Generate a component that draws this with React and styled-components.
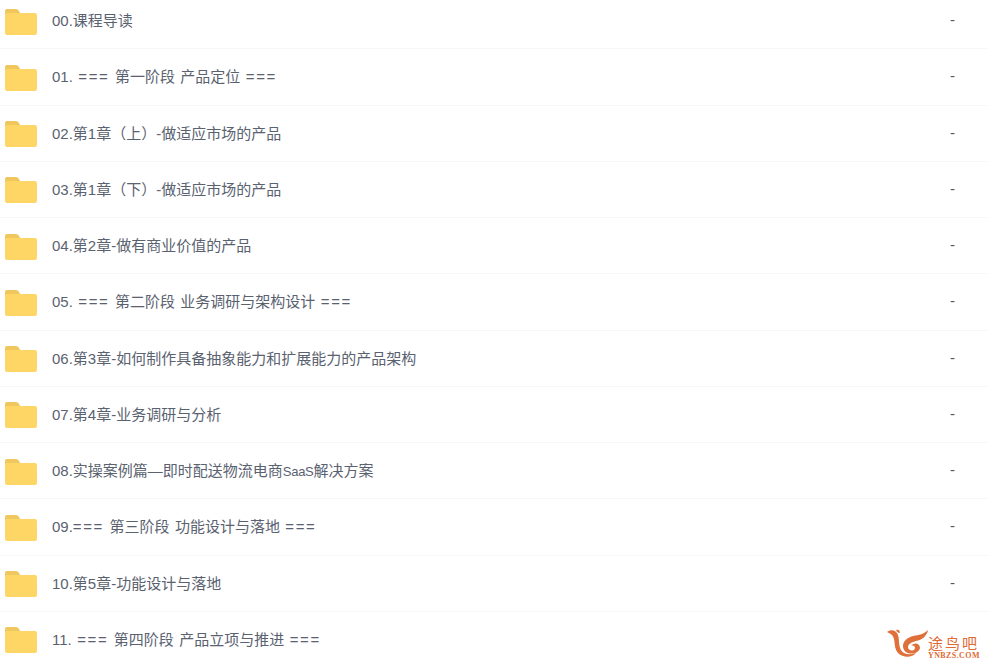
import styled, { createGlobalStyle } from "styled-components";

const GlobalStyle = createGlobalStyle`
  html, body {
    margin: 0;
    padding: 0;
    background: #fff;
    overflow: hidden;
  }
`;

const folders = [
  { name: "00.课程导读", size: "-" },
  { name: "01. === 第一阶段 产品定位 ===", size: "-" },
  { name: "02.第1章（上）-做适应市场的产品", size: "-" },
  { name: "03.第1章（下）-做适应市场的产品", size: "-" },
  { name: "04.第2章-做有商业价值的产品", size: "-" },
  { name: "05. === 第二阶段 业务调研与架构设计 ===", size: "-" },
  { name: "06.第3章-如何制作具备抽象能力和扩展能力的产品架构", size: "-" },
  { name: "07.第4章-业务调研与分析", size: "-" },
  { name: "08.实操案例篇—即时配送物流电商SaaS解决方案", size: "-" },
  { name: "09.=== 第三阶段 功能设计与落地 ===", size: "-" },
  { name: "10.第5章-功能设计与落地", size: "-" },
  { name: "11. === 第四阶段 产品立项与推进 ===", size: "" },
];

function FolderIcon() {
  return (
    <StyledFolderIcon viewBox="0 0 32 26">
      <path
        d="M0 2a2 2 0 0 1 2-2h8.5c1.2 0 2 .4 2.8 1.3L15 3.5V8H0z"
        fill="#f0c65e"
      />
      <path
        d="M0 5.5a1.5 1.5 0 0 1 1.5-1.5H30a2 2 0 0 1 2 2v18a2 2 0 0 1-2 2H2a2 2 0 0 1-2-2z"
        fill="#fed666"
      />
    </StyledFolderIcon>
  );
}

function Watermark() {
  return (
    <StyledWatermark>
      <svg width="42" height="32" viewBox="0 0 42 32">
        <path
          d="M1 5C5 2 9 3 11 6c3 4 1 12 4 17 3 5 9 5 15 3-4 5-13 5-18 0C7 20 10 12 6 8 5 7 3 6 1 5z"
          fill="#e0703a"
        />
        <path
          d="M42 3c-1 6-6 10-12 11-4 1-8 3-8 6 0 4 6 5 7 1 0-2-2-3-4-2 3-4 9-3 9 2-1 6-12 8-16 2-3-6 1-12 9-14 6-1 11-2 15-6z"
          fill="#e0703a"
        />
        <path d="M10 3c2-1 4 0 4 3-2 0-3-1-4-3z" fill="#e0703a" />
      </svg>
      <StyledWatermarkText>
        <StyledWatermarkName>途鸟吧</StyledWatermarkName>
        <StyledWatermarkSite>YNBZS.COM</StyledWatermarkSite>
      </StyledWatermarkText>
    </StyledWatermark>
  );
}

// the "===" marks and "SaaS" have other widths than the rest of the line
function FolderName({ name }) {
  return name.split(/(===|SaaS)/).map((part, index) => {
    if (part === "===") return <StyledEquals key={index}>{part}</StyledEquals>;
    if (part === "SaaS") return <StyledLatin key={index}>{part}</StyledLatin>;
    return part;
  });
}

export default function App() {
  return (
    <StyledPage>
      <GlobalStyle />
      <StyledList>
        {folders.map((folder) => (
          <StyledRow key={folder.name}>
            <FolderIcon />
            <StyledName>
              <FolderName name={folder.name} />
            </StyledName>
            <StyledSize>{folder.size}</StyledSize>
          </StyledRow>
        ))}
      </StyledList>
      <Watermark />
    </StyledPage>
  );
}

const StyledPage = styled.div`
  position: relative;
  width: 988px;
  height: 664px;
  overflow: hidden;
  background: #fff;
  font-family: "Liberation Sans", "Noto Sans CJK SC", sans-serif;
`;

const StyledList = styled.ul`
  list-style: none;
  margin: -7px 0 0;
  padding: 0;
`;

const StyledRow = styled.li`
  display: flex;
  align-items: center;
  height: 56.25px;
  box-sizing: border-box;
  padding-left: 5px;
  border-bottom: 1px solid #f6f7f8;
`;

const StyledFolderIcon = styled.svg`
  width: 32px;
  height: 26px;
  flex: none;
  margin-top: 2px;
`;

const StyledName = styled.span`
  margin-left: 15px;
  margin-top: -2px;
  flex: 1;
  font-size: 15px;
  word-spacing: 1.3px;
  color: #5a6270;
`;

const StyledEquals = styled.span`
  letter-spacing: 1.6px;
`;

const StyledLatin = styled.span`
  font-size: 13px;
  letter-spacing: -0.3px;
`;

const StyledSize = styled.span`
  width: 38px;
  margin-top: -2px;
  font-size: 15px;
  color: #555;
`;

const StyledWatermark = styled.div`
  position: absolute;
  left: 886px;
  top: 627px;
  display: flex;
  color: #dd6b37;
`;

const StyledWatermarkText = styled.div`
  display: flex;
  flex-direction: column;
  align-items: flex-start;
  margin-top: 9px;
`;

const StyledWatermarkName = styled.span`
  font-size: 15px;
  line-height: 16px;
  letter-spacing: 2px;
`;

const StyledWatermarkSite = styled.span`
  font-size: 8px;
  line-height: 8px;
  font-weight: 700;
  font-family: "Liberation Serif", serif;
  letter-spacing: 0.4px;
`;
